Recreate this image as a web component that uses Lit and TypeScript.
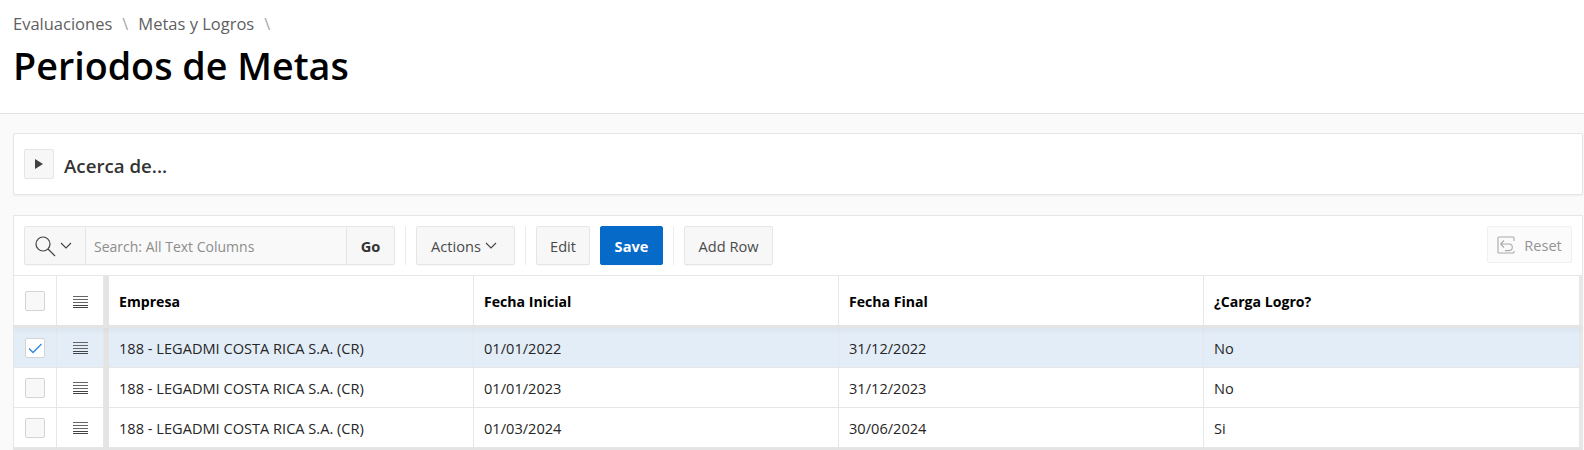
import { LitElement, html, css, svg } from "lit";
import { customElement } from "lit/decorators.js";

const menuIcon = svg`<svg width="15" height="13" viewBox="0 0 15 13"><path d="M0 .5h15M0 3.5h15M0 6.5h15" stroke="#666" stroke-width="1" fill="none"/><path d="M0 9.5h15M0 11.5h15" stroke="#444" stroke-width="1" fill="none"/></svg>`;

const chevron = svg`<svg width="12" height="7" viewBox="0 0 12 7"><path d="M1 1l5 5 5-5" stroke="#444" stroke-width="1.1" fill="none"/></svg>`;

const rows = [
  { e: "188 - LEGADMI COSTA RICA S.A. (CR)", a: "01/01/2022", b: "31/12/2022", c: "No", sel: true },
  { e: "188 - LEGADMI COSTA RICA S.A. (CR)", a: "01/01/2023", b: "31/12/2023", c: "No", sel: false },
  { e: "188 - LEGADMI COSTA RICA S.A. (CR)", a: "01/03/2024", b: "30/06/2024", c: "Si", sel: false },
];

@customElement("app-root")
export class AppRoot extends LitElement {
  static styles = css`
    :host { display: block; width: 1584px; height: 450px; overflow: hidden; background: #fafafa; font-family: "Open Sans", "Noto Sans", sans-serif; color: #262626; }
    .head { background: #fff; height: 114px; box-sizing: border-box; border-bottom: 1px solid #e2e2e2; padding: 12px 13px 0; }
    .crumbs { display: flex; align-items: center; font-size: 16.5px; line-height: 24px; color: #5f5f5f; }
    .crumbs i { font-style: normal; color: #a8a8a8; margin: 0 10px; }
    h1 { margin: 5px 0 0; font-size: 37.7px; line-height: 50px; font-weight: 600; color: #000; }
    .card { margin: 19px 1px 0 13px; height: 62px; box-sizing: border-box; background: #fff; border: 1px solid #e6e6e6; border-radius: 2px; box-shadow: 0 1px 2px rgba(0,0,0,.05); display: flex; align-items: center; padding-left: 10px; gap: 10px; }
    .tog { width: 30px; height: 30px; box-sizing: border-box; border: 1px solid #e6e6e6; border-radius: 2px; background: #f7f7f7; display: flex; align-items: center; justify-content: center; }
    .card span { font-size: 18.7px; font-weight: 600; color: #333; padding-top: 3px; }
    .region { margin: 20px 1px 0 13px; background: #fff; border: 1px solid #e6e6e6; border-bottom: 0; }
    .bar { height: 60px; box-sizing: border-box; border-bottom: 1px solid #e6e6e6; display: flex; align-items: flex-start; padding: 10px 10px 0; font-size: 14.6px; }
    .search { display: flex; height: 39px; width: 371px; box-sizing: border-box; border: 1px solid #e6e6e6; border-radius: 2px; background: #f7f7f7; box-shadow: 0 1px 1px rgba(0,0,0,.03); }
    .sicon { width: 61px; box-sizing: border-box; display: flex; align-items: center; gap: 3px; padding-left: 10px; border-right: 1px solid #e6e6e6; }
    .sinput { flex: 1; display: flex; align-items: center; padding: 2px 0 0 8px; color: #8d8d8d; background: #f9f9f9; font-size: 14px; }
    .go { width: 48px; box-sizing: border-box; border-left: 1px solid #e6e6e6; display: flex; align-items: center; justify-content: center; font-weight: 700; color: #333; }
    .sep { width: 1px; height: 39px; background: #ececec; margin: 0 10px; }
    .btn { height: 39px; box-sizing: border-box; border: 1px solid #e6e6e6; border-radius: 2px; background: #f7f7f7; box-shadow: 0 1px 1px rgba(0,0,0,.03); display: flex; align-items: center; justify-content: center; color: #4a4a4a; gap: 4px; }
    .actions { width: 99px; padding-right: 3px; }
    .edit { width: 54px; }
    .add { width: 89px; }
    .save { width: 63px; background: #056ac8; border-color: #056ac8; color: #fff; font-weight: 700; margin-left: 10px; }
    .reset { margin-left: auto; width: 85px; height: 37px; background: #fbfbfb; border-color: #f0f0f0; box-shadow: none; color: #949494; gap: 9px; }
    .grid { display: grid; grid-template-columns: 43px 47px 5px 365px 365px 365px 376px 1fr; font-size: 14.6px; }
    .cell { box-sizing: border-box; display: flex; align-items: center; border-right: 1px solid #e6e6e6; border-bottom: 1px solid #e6e6e6; padding-left: 10px; color: #262626; height: 40px; }
    .th { height: 49px; font-weight: 700; color: #000; border-bottom: 0; font-size: 14.1px; padding-top: 2px; }
    .ctr { justify-content: center; padding-left: 0; padding-top: 2px; }
    .ctr.th { padding-top: 4px; }
    .ck { justify-content: flex-start; padding-left: 11px; padding-top: 1px; }
    .thick { background: #e4e4e4; padding: 0; border: 0; }
    .shade { grid-column: 1 / -1; height: 3px; background: #e4e4e4; box-shadow: 0 3px 4px rgba(0,0,0,.05); position: relative; z-index: 1; }
    .sel { background: #e3edf8; }
    .box { width: 20px; height: 20px; box-sizing: border-box; border: 1px solid #d4d4d4; border-radius: 2px; background: #f8f8f8; display: flex; align-items: center; justify-content: center; }
    .sel .box { background: #fff; }
    .check { stroke: #2f86dc; stroke-width: 1.3; fill: none; }
    .endbar { background: #e8e8e8; padding: 0; border: 0; }
    .foot { height: 2px; background: #e4e4e4; }
  `;

  private row(r: (typeof rows)[number]) {
    const s = r.sel ? "sel" : "";
    return html`
      <div class="cell ck ${s}"><div class="box">${r.sel ? svg`<svg width="14" height="11" viewBox="0 0 14 11"><path class="check" d="M1 5.5l4 4L13.5 1"/></svg>` : ""}</div></div>
      <div class="cell ctr ${s}">${menuIcon}</div>
      <div class="cell thick"></div>
      <div class="cell ${s}">${r.e}</div>
      <div class="cell ${s}">${r.a}</div>
      <div class="cell ${s}">${r.b}</div>
      <div class="cell ${s}">${r.c}</div>
      <div class="cell endbar"></div>`;
  }

  render() {
    return html`
      <div class="head">
        <div class="crumbs">Evaluaciones<i>\\</i>Metas y Logros<i>\\</i></div>
        <h1>Periodos de Metas</h1>
      </div>
      <div class="card">
        <div class="tog"><svg width="8" height="10" viewBox="0 0 8 10"><path d="M0 0l8 5-8 5z" fill="#404040"/></svg></div>
        <span>Acerca de...</span>
      </div>
      <div class="region">
        <div class="bar">
          <div class="search">
            <div class="sicon">
              <svg width="22" height="22" viewBox="0 0 22 22"><circle cx="8" cy="9" r="7" stroke="#444" stroke-width="1.2" fill="none"/><path d="M13 14l7 7" stroke="#444" stroke-width="1.2"/></svg>
              ${chevron}
            </div>
            <div class="sinput">Search: All Text Columns</div>
            <div class="go">Go</div>
          </div>
          <div class="sep"></div>
          <div class="btn actions">Actions ${chevron}</div>
          <div class="sep"></div>
          <div class="btn edit">Edit</div>
          <div class="btn save">Save</div>
          <div class="sep"></div>
          <div class="btn add">Add Row</div>
          <div class="btn reset">
            <svg width="18" height="18" viewBox="0 0 18 18"><path d="M17 5V2a1 1 0 00-1-1H2a1 1 0 00-1 1v14a1 1 0 001 1h14a1 1 0 001-1v-1M3.5 8h8.5a3.3 3.3 0 010 6.6H8M3.5 8l3.5-3.5M3.5 8l3.5 3.5" stroke="#aaa" stroke-width="1.1" fill="none"/></svg>
            Reset
          </div>
        </div>
        <div class="grid">
          <div class="cell ck th"><div class="box"></div></div>
          <div class="cell ctr th">${menuIcon}</div>
          <div class="cell thick th"></div>
          <div class="cell th">Empresa</div>
          <div class="cell th">Fecha Inicial</div>
          <div class="cell th">Fecha Final</div>
          <div class="cell th">¿Carga Logro?</div>
          <div class="cell endbar th"></div>
          <div class="shade"></div>
          ${rows.map((r) => this.row(r))}
        </div>
        <div class="foot"></div>
      </div>
    `;
  }
}
